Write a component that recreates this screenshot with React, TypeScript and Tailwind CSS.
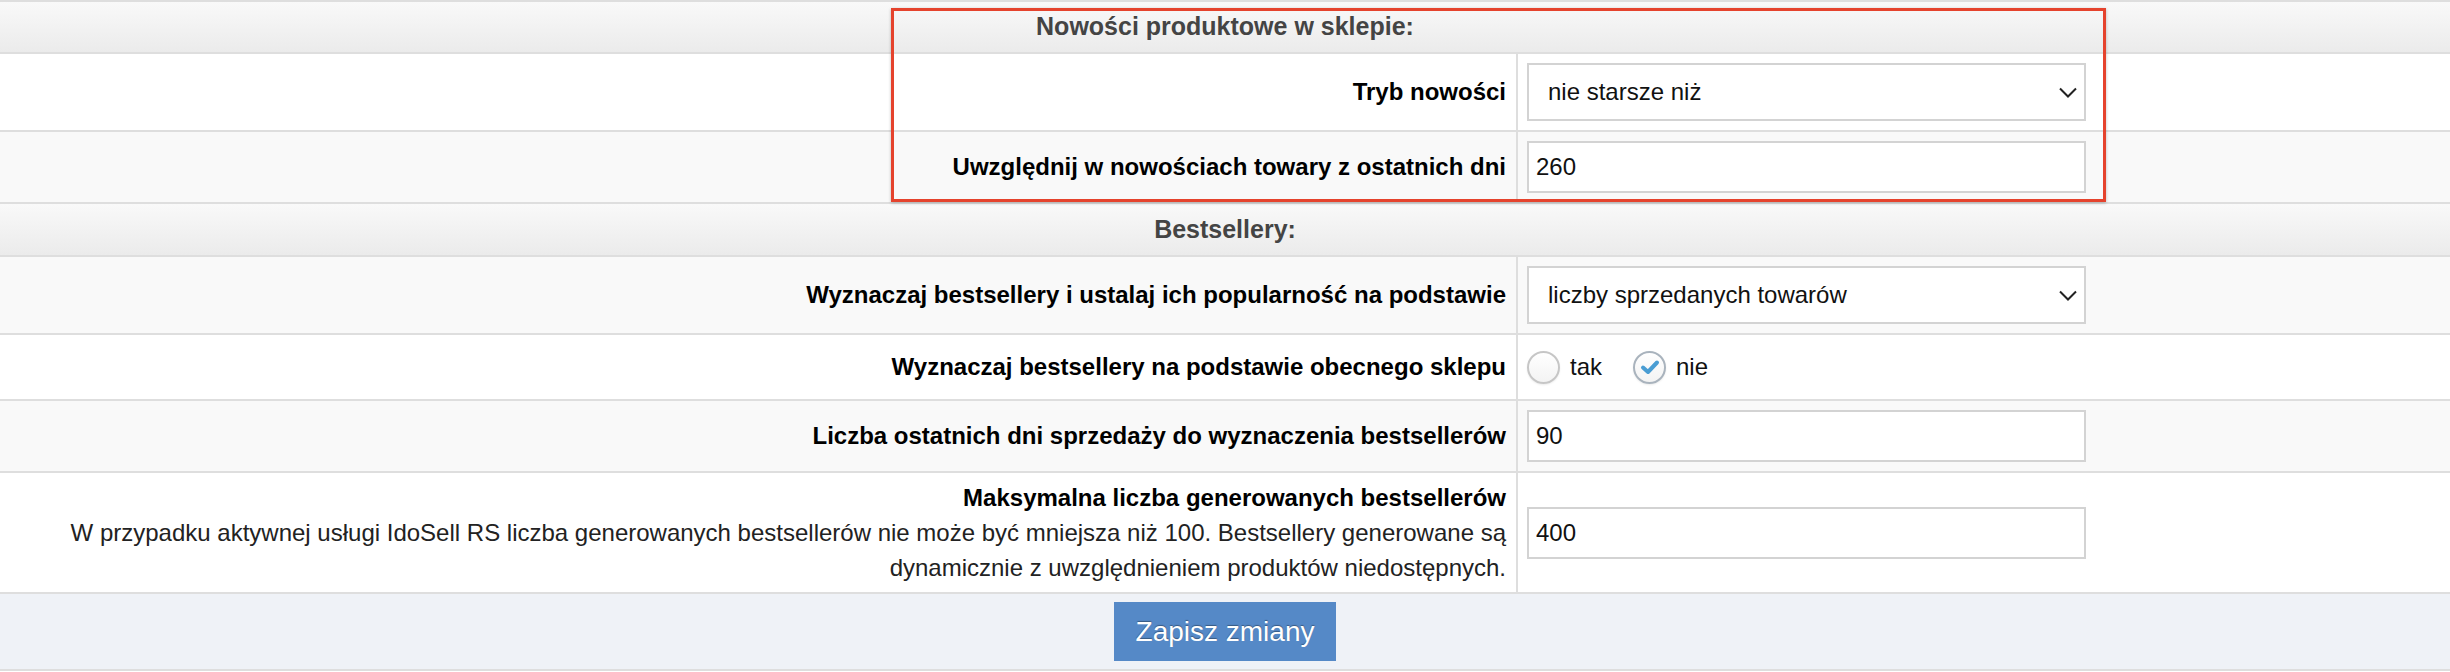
import type { ReactNode } from "react"

const FONT = "font-['Liberation_Sans',Helvetica,Arial,sans-serif]"

function SectionHeader({ title, className = "h-[53px]" }: { title: string; className?: string }) {
  return (
    <div
      className={`flex items-center justify-center border-b-2 border-[#dedede] bg-linear-to-b from-[#f9f9f9] to-[#ebebeb] text-[25px] font-bold text-[#444] ${className}`}
    >
      {title}
    </div>
  )
}

function Row({ label, children, tone = "white", className = "" }: { label: ReactNode; children: ReactNode; tone?: "white" | "gray"; className?: string }) {
  return (
    <div className={`flex border-b-2 border-[#dedede] ${tone === "gray" ? "bg-[#f9f9f9]" : "bg-white"}`}>
      <div className="flex w-[1518px] shrink-0 items-center justify-end border-r-2 border-[#dedede] pr-[10px] text-right text-[24px] font-bold text-black">
        {label}
      </div>
      <div className={`flex flex-1 items-center pl-[9px] ${className}`}>{children}</div>
    </div>
  )
}

function Select({ value }: { value: string }) {
  return (
    <div className="relative h-[58px] w-[559px]">
      <select
        defaultValue={value}
        className="h-full w-full appearance-none border-2 border-[#d3d3d3] bg-white pl-[19px] text-[24px] text-[#111] outline-none"
      >
        <option>{value}</option>
      </select>
      <svg className="pointer-events-none absolute right-[9px] top-[24px]" width="18" height="11" viewBox="0 0 18 11" fill="none">
        <path d="M1 1.5 L9 9.5 L17 1.5" stroke="#222" strokeWidth="2" />
      </svg>
    </div>
  )
}

function TextInput({ value }: { value: string }) {
  return (
    <input
      defaultValue={value}
      className="h-[52px] w-[559px] border-2 border-[#d3d3d3] bg-white pl-[7px] text-[24px] text-[#111] outline-none"
    />
  )
}

function Radio({ label, checked }: { label: string; checked?: boolean }) {
  return (
    <label className="flex items-center gap-[10px] text-[24px] text-[#111]">
      <span
        className={`flex h-[33px] w-[33px] items-center justify-center rounded-full border-2 bg-linear-to-b from-white to-[#f3f3f3] shadow-[0_1px_2px_rgba(0,0,0,0.08)] ${
          checked ? "border-[#a9b3bd]" : "border-[#c6c6c6]"
        }`}
      >
        {checked && (
          <svg width="20" height="16" viewBox="0 0 20 16" fill="none">
            <path d="M3 8.5 L8 13 L17 3.5" stroke="#4a9dd3" strokeWidth="4" strokeLinecap="round" strokeLinejoin="round" />
          </svg>
        )}
      </span>
      {label}
    </label>
  )
}

export default function App() {
  return (
    <div className={`relative w-[2450px] bg-white ${FONT}`}>
      <div className="border-t-2 border-[#dedede]">
        <SectionHeader title="Nowości produktowe w sklepie:" className="h-[52px]" />
        <Row label="Tryb nowości" className="py-[9px]">
          <Select value="nie starsze niż" />
        </Row>
        <Row label="Uwzględnij w nowościach towary z ostatnich dni" tone="gray" className="py-[9px]">
          <TextInput value="260" />
        </Row>

        <SectionHeader title="Bestsellery:" />
        <Row label="Wyznaczaj bestsellery i ustalaj ich popularność na podstawie" tone="gray" className="py-[9px]">
          <Select value="liczby sprzedanych towarów" />
        </Row>
        <Row label="Wyznaczaj bestsellery na podstawie obecnego sklepu" className="h-[64px]">
          <div className="flex items-center gap-[31px]">
            <Radio label="tak" />
            <Radio label="nie" checked />
          </div>
        </Row>
        <Row label="Liczba ostatnich dni sprzedaży do wyznaczenia bestsellerów" tone="gray" className="py-[9px]">
          <TextInput value="90" />
        </Row>
        <Row
          label={
            <div className="py-[7px] leading-[35px]">
              <div>Maksymalna liczba generowanych bestsellerów</div>
              <div className="whitespace-nowrap font-normal text-[#222]">
                W przypadku aktywnej usługi IdoSell RS liczba generowanych bestsellerów nie może być mniejsza niż 100. Bestsellery generowane są
              </div>
              <div className="font-normal text-[#222]">dynamicznie z uwzględnieniem produktów niedostępnych.</div>
            </div>
          }
        >
          <TextInput value="400" />
        </Row>

        <div className="flex justify-center border-b-2 border-[#dedede] bg-[#eff2f7] py-[8px]">
          <button className="h-[59px] w-[222px] bg-[#5589c7] text-[28px] text-white [text-shadow:0_-1px_1px_rgba(0,0,0,0.35)]">
            Zapisz zmiany
          </button>
        </div>
      </div>

      <div className="pointer-events-none absolute left-[891px] top-[8px] h-[194px] w-[1215px] border-[3px] border-[#e5432d] shadow-[0_1px_3px_rgba(0,0,0,0.25)]" />
    </div>
  )
}
